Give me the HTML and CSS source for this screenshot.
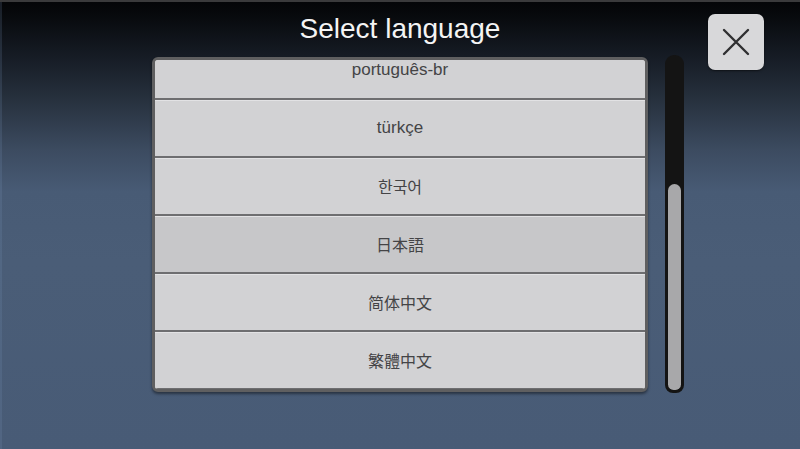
FILE: index.html
```html
<!DOCTYPE html>
<html lang="en">
<head>
<meta charset="utf-8">
<title>Select language</title>
<link rel="stylesheet" href="styles.css">
</head>
<body>
<div class="screen">
  <h1 class="title">Select language</h1>
  <div class="list">
    <ul class="items">
      <li class="item">português-br</li>
      <li class="item">türkçe</li>
      <li class="item cjk">한국어</li>
      <li class="item cjk selected">日本語</li>
      <li class="item cjk">简体中文</li>
      <li class="item cjk">繁體中文</li>
    </ul>
  </div>
  <div class="scrollbar"><div class="thumb"></div></div>
  <button class="close" aria-label="Close">
    <svg width="28" height="28" viewBox="0 0 28 28"><path d="M2 2 L26 26 M26 2 L2 26" stroke="#2f2f31" stroke-width="2.4" stroke-linecap="round" fill="none"/></svg>
  </button>
</div>
</body>
</html>
```
FILE: styles.css
```css
html, body {
  margin: 0;
  padding: 0;
}
body {
  width: 800px;
  height: 449px;
  overflow: hidden;
  font-family: "Liberation Sans", Arial, "Noto Sans CJK JP", sans-serif;
}
.screen {
  width: 800px;
  height: 449px;
  box-sizing: border-box;
  border-top: 2px solid #3a3a3b;
  background: linear-gradient(to bottom, #040507 0px, #07090c 12px, #161c25 55px, #27313e 98px, #3c4b60 148px, #485b75 190px, #4a5d77 260px, #485b76 449px);
  box-shadow: inset 2px 0 0 rgba(120, 150, 190, 0.18);
  display: grid;
  grid-template-columns: 152px 496px 17px 19px 24px 56px;
  grid-template-rows: 55px 335px;
}
.title {
  grid-column: 2;
  grid-row: 1;
  margin: 0;
  align-self: center;
  text-align: center;
  color: #f4f4f4;
  font-weight: normal;
  font-size: 28px;
  line-height: 30px;
  margin-top: -2px;
}
.list {
  grid-column: 2;
  grid-row: 2;
  box-sizing: border-box;
  height: 335px;
  border: 3px solid #5f5f60;
  border-radius: 6px;
  overflow: hidden;
  background: #d2d2d4;
  box-shadow: 0 2px 3px rgba(0, 0, 0, 0.45);
}
.items {
  list-style: none;
  margin: -18px 0 0 0;
  padding: 0;
}
.item {
  height: 56px;
  display: flex;
  align-items: center;
  justify-content: center;
  border-bottom: 2px solid #6e6e70;
  box-shadow: inset 0 1px 0 #e2e2e4;
  background: #d2d2d4;
  color: #444446;
  font-size: 17px;
}
.item.cjk {
  font-size: 16px;
  font-family: "Noto Sans CJK JP", "Noto Sans CJK KR", sans-serif;
}
.item.selected {
  background: #c7c7c9;
}
.scrollbar {
  grid-column: 4;
  grid-row: 2;
  margin-top: -2px;
  height: 338px;
  box-sizing: border-box;
  background: #141414;
  border-radius: 9px 9px 8px 8px;
  padding: 3px;
  display: flex;
  flex-direction: column;
  justify-content: flex-end;
}
.thumb {
  height: 206px;
  background: #a8a8aa;
  border-radius: 7px 7px 6px 6px;
}
.close {
  grid-column: 6;
  grid-row: 1 / 3;
  align-self: start;
  margin: 12px 0 0 0;
  width: 56px;
  height: 56px;
  padding: 0;
  border: none;
  border-radius: 7px;
  background: #d8d8da;
  box-shadow: 0 1px 2px rgba(0, 0, 0, 0.5);
  display: flex;
  align-items: center;
  justify-content: center;
}
```
